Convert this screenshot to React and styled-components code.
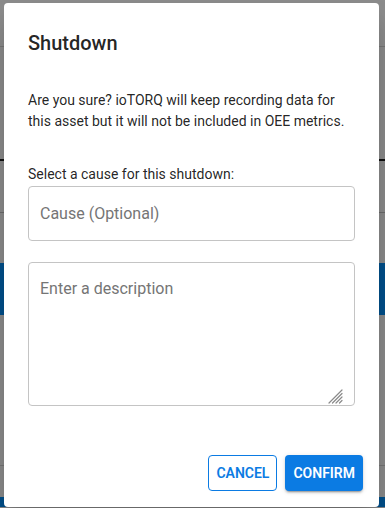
import React from 'react';
import styled, { createGlobalStyle } from 'styled-components';

const GlobalStyle = createGlobalStyle`
    html, body {
        margin: 0;
        padding: 0;
    }
    body {
        font-family: Roboto, "Liberation Sans", Arial, sans-serif;
        -webkit-font-smoothing: antialiased;
    }
`;

const Page = styled.div`
    position: relative;
    width: 385px;
    height: 508px;
    overflow: hidden;
    background-color: #8c8c8c;
    display: flex;
    flex-direction: column;
`;

const Gap = styled.div`
    height: ${(p) => p.h}px;
    flex-shrink: 0;
`;

const Rule = styled.div`
    height: ${(p) => p.h || 1}px;
    background-color: ${(p) => p.color || '#767676'};
    flex-shrink: 0;
`;

const Band = styled.div`
    height: ${(p) => p.h}px;
    background-color: #02508c;
    flex-shrink: 0;
`;

const Dialog = styled.div`
    position: absolute;
    left: 4px;
    top: 3px;
    width: 375px;
    height: 504px;
    box-sizing: border-box;
    background-color: #fff;
    border-radius: 4px;
    box-shadow: 0 11px 15px -7px rgba(0, 0, 0, 0.2), 0 24px 38px 3px rgba(0, 0, 0, 0.14);
    padding: 24px 24px 16px;
    display: flex;
    flex-direction: column;
`;

const Title = styled.h2`
    margin: 0;
    font-size: 20px;
    font-weight: 500;
    line-height: 32px;
    color: rgba(0, 0, 0, 0.87);
`;

const Text = styled.p`
    margin: ${(p) => p.top}px 0 0;
    font-size: 14px;
    line-height: 21px;
    color: rgba(0, 0, 0, 0.87);
`;

const Field = styled.input`
    margin-top: 1px;
    box-sizing: border-box;
    width: 100%;
    height: 55px;
    padding: 0 11px;
    border: 1px solid #c4c4c4;
    border-radius: 4px;
    font-family: inherit;
    font-size: 16px;
    color: rgba(0, 0, 0, 0.87);
    outline: none;

    &::placeholder {
        color: #757575;
        opacity: 1;
    }
`;

const AreaWrap = styled.div`
    position: relative;
    margin-top: 21px;
    height: 144px;
`;

const Description = styled.textarea`
    display: block;
    box-sizing: border-box;
    width: 100%;
    height: 100%;
    padding: 16px 11px;
    border: 1px solid #c4c4c4;
    border-radius: 4px;
    font-family: inherit;
    font-size: 16px;
    line-height: 20px;
    color: rgba(0, 0, 0, 0.87);
    resize: none;
    outline: none;

    &::placeholder {
        color: #757575;
        opacity: 1;
    }
`;

const Grip = styled.svg`
    position: absolute;
    right: 12px;
    bottom: 2px;
    width: 15px;
    height: 15px;
    pointer-events: none;
`;

const Actions = styled.div`
    margin-top: auto;
    margin-right: -8px;
    display: flex;
    justify-content: flex-end;
    gap: 8px;
`;

const Button = styled.button`
    height: 36px;
    box-sizing: border-box;
    padding: 0 ${(p) => (p.primary ? 8 : 7)}px;
    border-radius: 4px;
    font-family: inherit;
    font-size: 14px;
    font-weight: 600;
    letter-spacing: 0;
    text-transform: uppercase;
    cursor: pointer;
    border: ${(p) => (p.primary ? 'none' : '1px solid #0b7be3')};
    background-color: ${(p) => (p.primary ? '#0b7be3' : '#fff')};
    color: ${(p) => (p.primary ? '#fff' : '#0b7be3')};
    box-shadow: ${(p) =>
        p.primary
            ? '0 3px 1px -2px rgba(0,0,0,0.2), 0 2px 2px 0 rgba(0,0,0,0.14), 0 1px 5px 0 rgba(0,0,0,0.12)'
            : 'none'};
`;

const App = () => {
    return (
        <>
            <GlobalStyle />
            <Page>
                <Gap h={46} />
                <Rule />
                <Gap h={112} />
                <Rule h={2} color="#111" />
                <Gap h={51} />
                <Rule color="#6c6c6c" />
                <Gap h={50} />
                <Band h={52} />
                <Gap h={150} />
                <Rule />
                <Gap h={31} />
                <Band h={10} />

                <Dialog>
                    <Title>Shutdown</Title>
                    <Text top={31}>
                        Are you sure? ioTORQ will keep recording data for this asset but it will
                        not be included in OEE metrics.
                    </Text>
                    <Text top={32}>Select a cause for this shutdown:</Text>
                    <Field placeholder="Cause (Optional)" />
                    <AreaWrap>
                        <Description placeholder="Enter a description" />
                        <Grip viewBox="0 0 15 15">
                            <g stroke="#8a8a8a" strokeWidth="1.2" strokeLinecap="round">
                                <line x1="1" y1="14" x2="14" y2="1" />
                                <line x1="4.5" y1="14" x2="14" y2="4.5" />
                                <line x1="8" y1="14" x2="14" y2="8" />
                                <line x1="11.5" y1="14" x2="14" y2="11.5" />
                            </g>
                        </Grip>
                    </AreaWrap>
                    <Actions>
                        <Button>Cancel</Button>
                        <Button primary>Confirm</Button>
                    </Actions>
                </Dialog>
            </Page>
        </>
    );
};

export default App;
